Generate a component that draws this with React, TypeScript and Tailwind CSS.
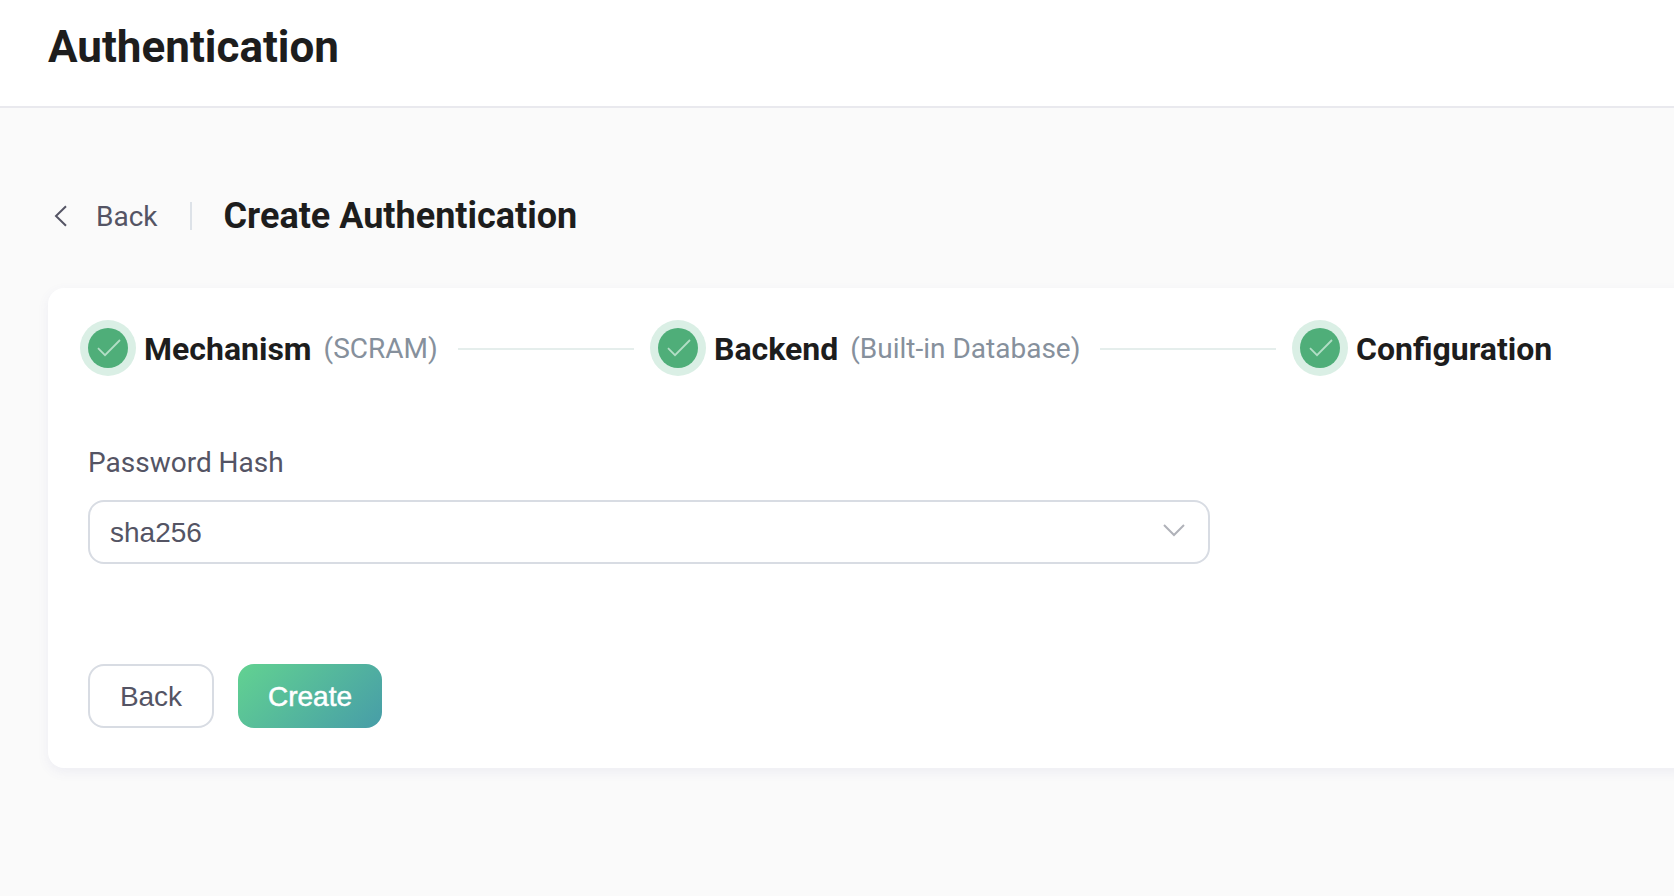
import React from "react";

function CheckBadge() {
  return (
    <span className="flex h-10 w-10 shrink-0 items-center justify-center rounded-full bg-[#4fae79] ring-8 ring-[#daefe5]">
      <svg width="40" height="40" viewBox="0 0 40 40" fill="none" stroke="#b2dec6" strokeWidth="1.8">
        <path d="M10 20.2 17 27.2 32 12" />
      </svg>
    </span>
  );
}

type StepProps = { title: string; note?: string; width: string };

function Step({ title, note, width }: StepProps) {
  return (
    <div className={`flex h-14 shrink-0 items-center whitespace-nowrap ${width}`}>
      <CheckBadge />
      <span className="ml-4 pt-0.5 text-[32px] font-bold leading-[36px] text-[#1d1d1d]">{title}</span>
      {note && <span className="ml-3 pt-0.5 text-[28px] leading-[36px] text-[#86909c]">{note}</span>}
    </div>
  );
}

function Connector() {
  return <div className="mr-6 mt-0.5 h-0.5 w-44 shrink-0 bg-[#e5eeec]" />;
}

export default function App() {
  return (
    <div className="flex h-[896px] w-full flex-col overflow-hidden bg-[#fafafa] font-['Roboto',sans-serif] text-[#545464]">
      <header className="flex h-[108px] shrink-0 items-start border-b-2 border-[#e9e9ee] bg-white pl-12 pt-[21px]">
        <h1 className="text-[44px] font-bold leading-[52px] text-[#1d1d1d]">Authentication</h1>
      </header>

      <main className="pl-12">
        <div className="flex h-[180px] items-center pt-9">
          <a className="flex items-center">
            <svg width="24" height="28" viewBox="0 0 24 28" fill="none" stroke="#545464" strokeWidth="2">
              <path d="M18 4.2 8 14 18 23.8" />
            </svg>
            <span className="ml-6 pt-px text-[28px] leading-[36px]">Back</span>
          </a>
          <span className="ml-8 h-7 w-0.5 bg-[#dde2e8]" />
          <h2 className="ml-8 text-[36px] font-bold leading-[44px] text-[#1d1d1d]">Create Authentication</h2>
        </div>

        <section className="-mr-6 h-[480px] rounded-[16px] bg-white pl-10 pt-8 shadow-[0_4px_12px_rgba(90,90,160,0.08)]">
          <div className="flex items-center">
            <Step title="Mechanism" note="(SCRAM)" width="w-[370px]" />
            <Connector />
            <Step title="Backend" note="(Built-in Database)" width="w-[442px]" />
            <Connector />
            <Step title="Configuration" width="w-[300px]" />
          </div>

          <label className="mt-[69px] block text-[28px] leading-[36px]">Password Hash</label>
          <div className="mt-[19px] flex h-16 w-[1122px] items-center justify-between rounded-[16px] border-2 border-[#d8dce3] pl-5 pr-[22px] font-['Liberation_Sans',sans-serif] text-[28px]">
            <span className="pt-px">sha256</span>
            <svg width="24" height="24" viewBox="0 0 24 24" fill="none" stroke="#b0b2b9" strokeWidth="2">
              <path d="M2 5 12 15 22 5" />
            </svg>
          </div>

          <div className="mt-[100px] flex gap-6 font-['Liberation_Sans',sans-serif] text-[28px]">
            <button className="h-16 w-[126px] rounded-[16px] border-2 border-[#d8dce3] bg-white pt-px">Back</button>
            <button className="h-16 w-36 rounded-[16px] bg-[linear-gradient(135deg,#62d291_0%,#479da8_100%)] pt-px text-white [-webkit-text-stroke:0.5px_white]">Create</button>
          </div>
        </section>
      </main>
    </div>
  );
}
